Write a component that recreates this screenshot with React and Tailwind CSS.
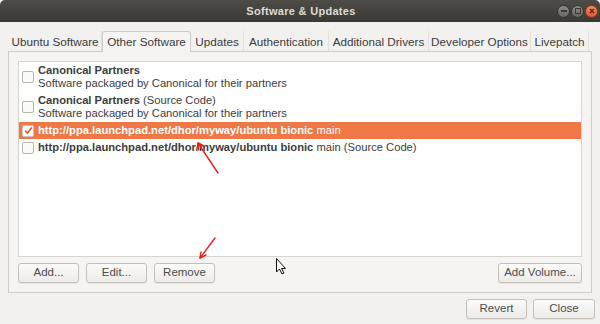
import React from 'react';

const tabs = [
  { label: 'Ubuntu Software', w: 'w-[93px]' },
  { label: 'Other Software', w: 'w-[89px]', active: true },
  { label: 'Updates', w: 'w-[53px]' },
  { label: 'Authentication', w: 'w-[85px]' },
  { label: 'Additional Drivers', w: 'w-[100px]' },
  { label: 'Developer Options', w: 'w-[102px]' },
  { label: 'Livepatch', w: 'w-[58px]' },
];

const sources = [
  { title: 'Canonical Partners', extra: '', sub: 'Software packaged by Canonical for their partners' },
  { title: 'Canonical Partners', extra: ' (Source Code)', sub: 'Software packaged by Canonical for their partners' },
  { title: 'http://ppa.launchpad.net/dhor/myway/ubuntu bionic', extra: ' main', checked: true, selected: true },
  { title: 'http://ppa.launchpad.net/dhor/myway/ubuntu bionic', extra: ' main (Source Code)' },
];

function Checkbox({ checked, selected }) {
  return (
    <div
      className={`w-[12px] h-[12px] shrink-0 rounded-[2px] border flex items-center justify-center ${
        selected ? 'border-[#c9c6c1] bg-white' : 'border-[#b9b6b0] bg-[#fbfbfa]'
      }`}
    >
      {checked && (
        <svg width="9" height="9" viewBox="0 0 9 9">
          <path d="M1.2 4.6 L3.5 7 L7.8 1.6" fill="none" stroke="#d35a2d" strokeWidth="1.6" />
        </svg>
      )}
    </div>
  );
}

function Button({ children, className = '' }) {
  return (
    <button
      className={`h-[20px] rounded-[3px] border border-[#c3c0bb] bg-gradient-to-b from-[#fbfbfa] to-[#ecebe9] text-[#4c4c4c] text-[11.5px] leading-none shadow-[0_1px_0_rgba(0,0,0,0.05)] ${className}`}
    >
      {children}
    </button>
  );
}

function WinButton({ kind }) {
  if (kind === 'close') {
    return (
      <div className="w-[13px] h-[13px] rounded-full bg-gradient-to-b from-[#f58a5c] to-[#e0542a] border border-[#8a3a1c] flex items-center justify-center">
        <svg width="6" height="6" viewBox="0 0 6 6">
          <path d="M1 1 L5 5 M5 1 L1 5" stroke="#5a2613" strokeWidth="1.3" />
        </svg>
      </div>
    );
  }
  return (
    <div className="w-[13px] h-[13px] rounded-full bg-gradient-to-b from-[#8b8a85] to-[#66655f] border border-[#33322e] flex items-center justify-center">
      {kind === 'min' ? (
        <div className="w-[6px] h-[2px] bg-[#3a3935]" />
      ) : (
        <div className="w-[6px] h-[6px] border border-[#3a3935]" />
      )}
    </div>
  );
}

export default function App() {
  return (
    <div
      className="relative w-[600px] h-[324px] flex flex-col bg-[#f2f1f0] text-[#3c3c3c] overflow-hidden"
      style={{ fontFamily: '"Liberation Sans", "DejaVu Sans", sans-serif' }}
    >
      {/* Title bar */}
      <div className="h-[22px] shrink-0 grid grid-cols-[1fr_auto_1fr] items-center rounded-t-[5px] bg-gradient-to-b from-[#4e4c47] to-[#3a3935] pl-[6px] pr-[4px]">
        <div />
        <div className="text-[11px] font-bold text-[#dfdbd2] tracking-[0.3px]">Software &amp; Updates</div>
        <div className="flex justify-end gap-[1px] -mr-[2px]">
          <WinButton kind="min" />
          <WinButton kind="max" />
          <WinButton kind="close" />
        </div>
      </div>

      <div className="flex flex-col px-[8px] pt-[9px]">
        {/* Tabs */}
        <div className="flex items-end h-[21px] pl-[1px] -mb-[1px]">
          {tabs.map((t) => (
            <div
              key={t.label}
              className={`${t.w} h-[21px] shrink-0 flex items-center justify-center whitespace-nowrap text-[11.7px] leading-none ${
                t.active
                  ? 'border border-b-0 border-[#cfcdc9] rounded-t-[3px] bg-[#f5f4f3] relative z-10'
                  : 'border-r border-[#e2e0dc]'
              }`}
            >
              {t.label}
            </div>
          ))}
        </div>

        {/* Notebook panel */}
        <div className="h-[242px] border border-[#cfcdc9] bg-[#f5f4f3] flex flex-col px-[9px] pt-[9px] pb-[9px]">
          <div className="flex-1 bg-white border border-[#d6d4d0] flex flex-col">
            {sources.map((s, i) => (
              <div
                key={i}
                className={`flex items-center gap-[4px] pl-[3px] ${
                  s.sub ? 'h-[30px]' : 'h-[17px]'
                } ${s.selected ? 'bg-[#f07746] text-white' : ''}`}
              >
                <Checkbox checked={s.checked} selected={s.selected} />
                <div className="flex flex-col text-[11.2px] leading-[13px] whitespace-nowrap">
                  <div>
                    <span className="font-bold">{s.title}</span>
                    {s.extra}
                  </div>
                  {s.sub && <div>{s.sub}</div>}
                </div>
              </div>
            ))}
          </div>
          <div className="flex items-center gap-[7px] mt-[6px]">
            <Button className="w-[61px]">Add...</Button>
            <Button className="w-[61px]">Edit...</Button>
            <Button className="w-[61px]">Remove</Button>
            <div className="flex-1" />
            <Button className="w-[84px]">Add Volume...</Button>
          </div>
        </div>

        {/* Dialog buttons */}
        <div className="flex justify-end gap-[6px] mt-[6px] -mr-[3px]">
          <Button className="w-[61px]">Revert</Button>
          <Button className="w-[62px]">Close</Button>
        </div>
      </div>

      {/* Annotation arrows and pointer over the screenshot */}
      <svg className="absolute inset-0 pointer-events-none" width="600" height="324">
        <g stroke="#e8201c" strokeWidth="1.4" fill="none" strokeLinecap="round">
          <path d="M218 173 L198 143" />
          <path d="M198 143 L198.5 150 M198 143 L204 146" />
          <path d="M215 238 L200 258" />
          <path d="M200 258 L201 252 M200 258 L206 255" />
        </g>
        <path
          d="M276.5 258.5 L276.5 272 L279.5 269 L282 274 L284 273 L281.5 268.5 L285.5 268.5 Z"
          fill="#fff"
          stroke="#111"
          strokeWidth="1"
          strokeLinejoin="round"
        />
      </svg>
    </div>
  );
}
